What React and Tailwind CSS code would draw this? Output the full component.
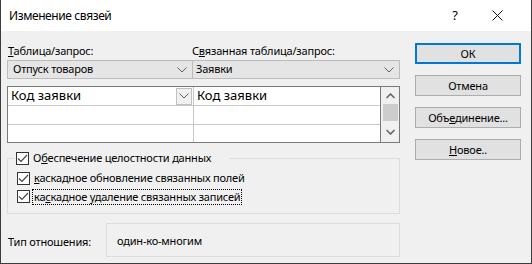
import React from 'react';

const Chevron = ({ className = '' }) => (
    <svg width="10" height="6" viewBox="0 0 10 6" className={className}>
        <polyline points="0.5,0.5 5,5 9.5,0.5" fill="none" stroke="#606060" strokeWidth="1" />
    </svg>
);

const Check = () => (
    <div className="w-[13px] h-[13px] bg-white border border-[#333] flex items-center justify-center shrink-0">
        <svg width="11" height="9" viewBox="0 0 11 9">
            <polyline points="1,4.5 4,7.5 10,1" fill="none" stroke="#444" strokeWidth="1.2" />
        </svg>
    </div>
);

function Button({ children, primary }) {
    return (
        <button
            className={
                primary
                    ? 'h-[21px] w-[106px] bg-[#e1e1e1] border-2 border-[#0078d7] text-[11px] tracking-[-0.2px] text-black leading-none'
                    : 'h-[21px] w-[106px] bg-[#e1e1e1] border border-[#adadad] text-[11px] tracking-[-0.2px] text-black leading-none'
            }
        >
            {children}
        </button>
    );
}

export default function App() {
    return (
        <div className="w-[532px] h-[264px] bg-[#f0f0f0] border-x border-b border-[#3c3c3c] flex flex-col overflow-hidden text-black font-['Segoe_UI','Noto_Sans',sans-serif]">
            {/* Title bar */}
            <div className="h-[31px] bg-white flex items-center shrink-0">
                <span className="ml-[8px] text-[12px] tracking-[-0.4px]">Изменение связей</span>
                <span className="ml-auto text-[13px] w-[10px] text-center">?</span>
                <svg width="11" height="11" viewBox="0 0 11 11" className="ml-[32px] mr-[28px]">
                    <path d="M0.5 0.5 L10.5 10.5 M10.5 0.5 L0.5 10.5" stroke="#111" strokeWidth="1" />
                </svg>
            </div>

            <div className="flex flex-1 pl-[6px]">
                {/* Left column */}
                <div className="w-[393px] flex flex-col pt-[11px] text-[11px] tracking-[-0.2px]">
                    <div className="flex h-[18px] items-center">
                        <span className="w-[185px] pl-px"><span className="underline">Т</span>аблица/запрос:</span>
                        <span>С<span className="underline">в</span>язанная таблица/запрос:</span>
                    </div>
                    <div className="flex h-[19px]">
                        <div className="w-[186px] bg-[#e5e5e5] border border-[#bcbcbc] flex items-center pl-[5px] pr-[5px]">
                            <span className="flex-1">Отпуск товаров</span>
                            <Chevron />
                        </div>
                        <div className="flex-1 bg-[#e5e5e5] border border-l-0 border-[#bcbcbc] flex items-center pl-[3px] pr-[5px]">
                            <span className="flex-1">Заявки</span>
                            <Chevron />
                        </div>
                    </div>

                    {/* Grid */}
                    <div className="mt-[7px] h-[57px] border border-[#7a7a7a] bg-white flex tracking-normal">
                        <div className="flex-1 flex flex-col">
                            <div className="h-[19px] flex border-b border-[#c8c8c8]">
                                <div className="w-[186px] flex items-center pl-[3px] border-r border-[#c8c8c8]">
                                    <span className="flex-1 text-[13px]">Код заявки</span>
                                    <div className="w-[16px] h-[17px] bg-[#f0f0f0] border border-[#c0c0c0] flex items-center justify-center mr-px">
                                        <Chevron />
                                    </div>
                                </div>
                                <div className="flex-1 flex items-center pl-[3px] text-[13px]">Код заявки</div>
                            </div>
                            <div className="h-[19px] flex border-b border-[#c8c8c8]">
                                <div className="w-[186px] border-r border-[#c8c8c8]" />
                                <div className="flex-1" />
                            </div>
                            <div className="flex-1 flex">
                                <div className="w-[186px] border-r border-[#c8c8c8]" />
                                <div className="flex-1" />
                            </div>
                        </div>
                        {/* Scrollbar */}
                        <div className="w-[19px] bg-[#f0f0f0] border-l border-[#7a7a7a] flex flex-col items-center">
                            <div className="h-[17px] flex items-center justify-center">
                                <svg width="9" height="6" viewBox="0 0 9 6">
                                    <polyline points="0.5,5 4.5,1 8.5,5" fill="none" stroke="#606060" strokeWidth="1.5" />
                                </svg>
                            </div>
                            <div className="w-[15px] h-[17px] bg-[#cdcdcd]" />
                            <div className="flex-1 flex items-center justify-center">
                                <svg width="9" height="6" viewBox="0 0 9 6">
                                    <polyline points="0.5,1 4.5,5 8.5,1" fill="none" stroke="#606060" strokeWidth="1.5" />
                                </svg>
                            </div>
                        </div>
                    </div>

                    {/* Group box */}
                    <div className="mt-[15px] h-[56px] border border-[#dcdcdc] flex flex-col pl-[7px]">
                        <div className="-mt-[10px] flex items-center gap-[4px] h-[18px] self-start bg-[#f0f0f0] pl-px pr-[18px]">
                            <Check />
                            <span>О<span className="underline">б</span>еспечение целостности данных</span>
                        </div>
                        <div className="mt-[3px] flex items-center gap-[4px] h-[17px] pl-[2px]">
                            <Check />
                            <span><span className="underline">к</span>аскадное обновление связанных полей</span>
                        </div>
                        <div className="mt-[1px] flex items-center gap-[3px] h-[17px] pl-[2px]">
                            <Check />
                            <span className="outline outline-1 outline-dotted outline-black px-px leading-[14px]">ка<span className="underline">с</span>кадное удаление связанных записей</span>
                        </div>
                    </div>

                    {/* Relation type */}
                    <div className="mt-[9px] flex items-center">
                        <span className="w-[99px] pl-px mt-[4px]">Тип отношения:</span>
                        <div className="flex-1 h-[34px] border border-[#dcdcdc] pl-[10px] pt-[9px]">один-ко-многим</div>
                    </div>
                </div>

                {/* Buttons */}
                <div className="ml-[15px] pt-[12px] flex flex-col gap-[11px]">
                    <Button primary>ОК</Button>
                    <Button>Отмена</Button>
                    <Button>Объ<span className="underline">е</span>динение...</Button>
                    <Button><span className="underline">Н</span>овое..</Button>
                </div>
            </div>
        </div>
    );
}
